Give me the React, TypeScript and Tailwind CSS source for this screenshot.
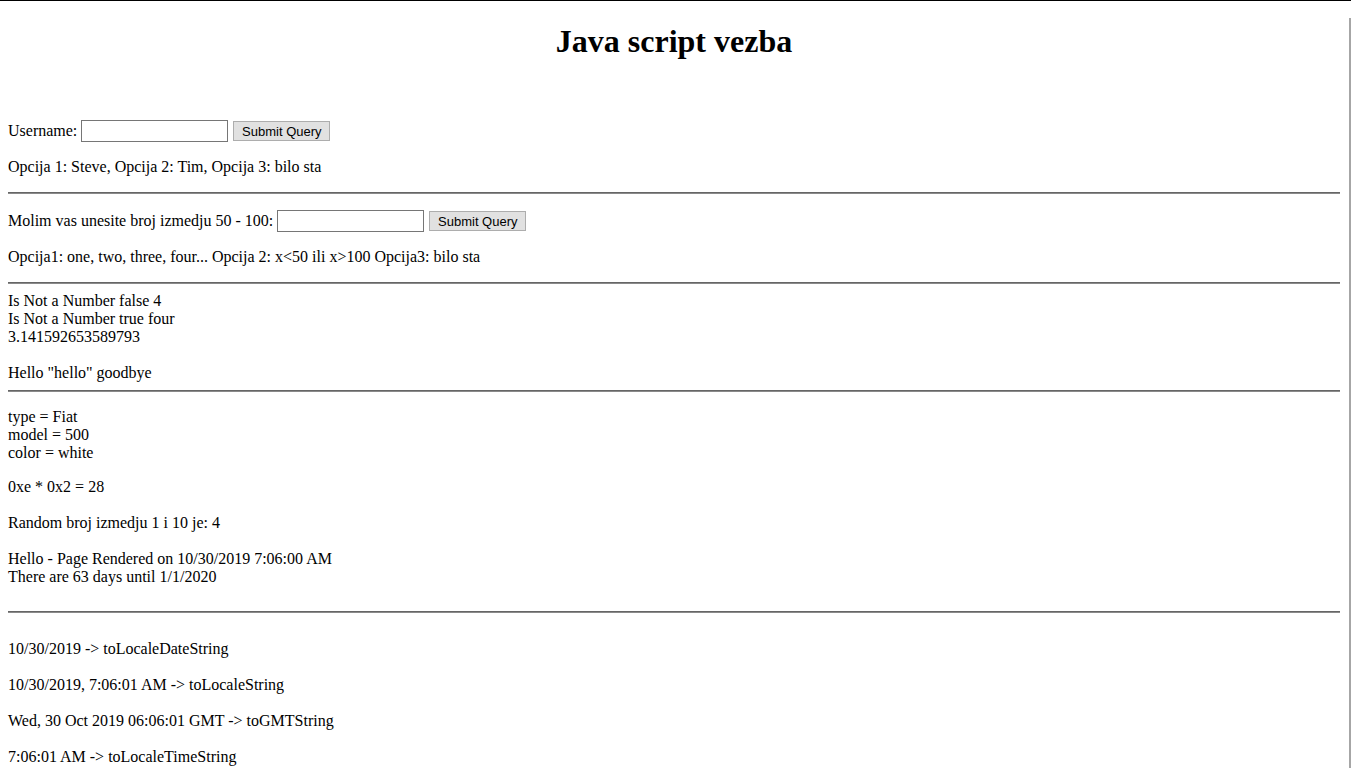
export default function App() {
  const serif = "font-['Liberation_Serif','Times_New_Roman',serif]";
  const line = "h-[18px] leading-[18px] whitespace-pre";

  const Input = () => (
    <div className="h-[22px] w-[147px] border border-[#767676] bg-white" />
  );
  const Button = () => (
    <div className="flex h-[20px] w-[97px] items-center justify-center border border-[#adadad] bg-[#e1e1e1] font-['Liberation_Sans',Arial,sans-serif] text-[13px] leading-none text-black">
      Submit Query
    </div>
  );
  const Rule = () => (
    <div className="h-[2px] border-t border-b border-t-[#666666] border-b-[#8a8a8a]" />
  );

  return (
    <div className={`flex min-h-screen w-[1351px] border-t border-black bg-white text-[16px] text-black ${serif}`}>
      <div className="w-[1348px] px-2">
        <h1 className="mt-[22px] h-[37px] text-center text-[32px] font-bold leading-[37px]">
          Java script vezba
        </h1>

        <div className="mt-[60px] flex h-[22px] items-center">
          <span className="leading-[18px]">Username:</span>
          <div className="ml-[4px]">
            <Input />
          </div>
          <div className="ml-[5px]">
            <Button />
          </div>
        </div>
        <div className={`mt-[16px] ${line}`}>Opcija 1: Steve, Opcija 2: Tim, Opcija 3: bilo sta</div>

        <div className="mt-[16px]">
          <Rule />
        </div>

        <div className="mt-[16px] flex h-[22px] items-center">
          <span className="leading-[18px]">Molim vas unesite broj izmedju 50 - 100:</span>
          <div className="ml-[4px]">
            <Input />
          </div>
          <div className="ml-[5px]">
            <Button />
          </div>
        </div>
        <div className={`mt-[16px] ${line}`}>
          {"Opcija1: one, two, three, four... Opcija 2: x<50 ili x>100 Opcija3: bilo sta"}
        </div>

        <div className="mt-[16px]">
          <Rule />
        </div>

        <div className="mt-[8px]">
          <div className={line}>Is Not a Number false 4</div>
          <div className={line}>Is Not a Number true four</div>
          <div className={line}>3.141592653589793</div>
          <div className={line}> </div>
          <div className={line}>Hello "hello" goodbye</div>
        </div>

        <div className="mt-[8px]">
          <Rule />
        </div>

        <div className="mt-[16px]">
          <div className={line}>type = Fiat</div>
          <div className={line}>model = 500</div>
          <div className={line}>color = white</div>
        </div>
        <div className={`mt-[16px] ${line}`}>0xe * 0x2 = 28</div>
        <div className={`mt-[18px] ${line}`}>Random broj izmedju 1 i 10 je: 4</div>
        <div className="mt-[18px]">
          <div className={line}>Hello - Page Rendered on 10/30/2019 7:06:00 AM</div>
          <div className={line}>There are 63 days until 1/1/2020</div>
        </div>

        <div className="mt-[25px]">
          <Rule />
        </div>

        <div className="mt-[27px]">
          <div className={line}>{"10/30/2019 -> toLocaleDateString"}</div>
          <div className={line}> </div>
          <div className={line}>{"10/30/2019, 7:06:01 AM -> toLocaleString"}</div>
          <div className={line}> </div>
          <div className={line}>{"Wed, 30 Oct 2019 06:06:01 GMT -> toGMTString"}</div>
          <div className={line}> </div>
          <div className={line}>{"7:06:01 AM -> toLocaleTimeString"}</div>
          <div className={line}> </div>
        </div>
      </div>

      <div className="flex w-[3px] justify-end pt-[17px]">
        <div className="w-[2px] bg-[#a6a6a6]" />
      </div>
    </div>
  );
}
